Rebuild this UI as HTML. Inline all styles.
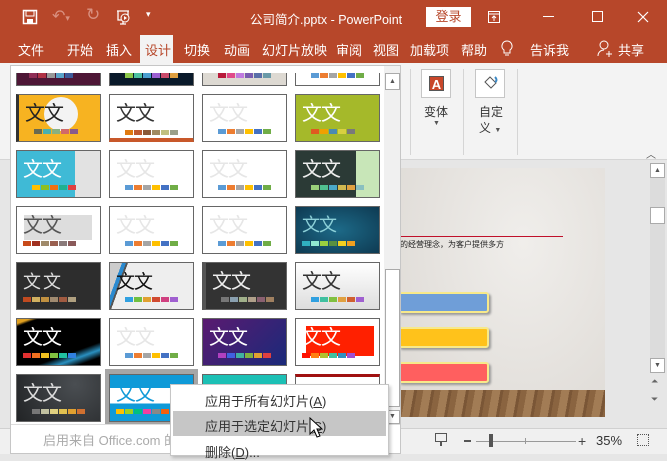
<!DOCTYPE html>
<html><head><meta charset="utf-8"><style>
*{margin:0;padding:0;box-sizing:border-box}
body{width:667px;height:454px;overflow:hidden;position:relative;background:#e6e6e6;font-family:"Liberation Sans","Noto Sans CJK SC",sans-serif}
.a{position:absolute}
.tb{position:absolute;top:0;left:0;width:667px;height:63px;background:#b7472a}
.tab{position:absolute;top:40px;color:#fff;font-size:13px}
.t{position:absolute;width:85px;height:48px;border:1px solid #666;overflow:hidden}
.t b{position:absolute;left:6px;top:2px;font:20px "Noto Sans CJK SC",sans-serif;letter-spacing:-1px;font-weight:400}
.t i{position:absolute;left:15px;bottom:7px;display:flex;gap:1px}
.t i s{display:block;width:8px;height:5px;text-decoration:none}
.sw s:nth-child(1){background:#5b9bd5}.sw s:nth-child(2){background:#ed7d31}.sw s:nth-child(3){background:#a5a5a5}.sw s:nth-child(4){background:#ffc000}.sw s:nth-child(5){background:#4472c4}.sw s:nth-child(6){background:#70ad47}
.f b{color:#e6e6e6}
.mi{position:absolute;left:34px;font-size:13px;color:#333}
</style></head><body>
<div class="tb"></div>
<svg class="a" style="left:22px;top:9px" width="16" height="16" viewBox="0 0 16 16"><rect x="1.5" y="1.5" width="13" height="13" fill="none" stroke="#fff" stroke-width="1.5"/><rect x="4" y="2" width="8" height="5" fill="none" stroke="#fff"/><rect x="5" y="10" width="6" height="4" fill="#fff"/></svg>
<div class="a" style="left:52px;top:6px;color:#d99080;font-size:16px">↶<span style="font-size:9px">▾</span></div>
<div class="a" style="left:86px;top:5px;color:#d99080;font-size:17px">↻</div>
<svg class="a" style="left:115px;top:9px" width="18" height="18" viewBox="0 0 18 18"><path d="M2 2h12M3 2v9h10V2M8 11v4M5 15h6" stroke="#fff" fill="none" stroke-width="1.3"/><circle cx="10" cy="9" r="4" fill="#b7472a" stroke="#fff"/><path d="M9 7l3 2-3 2z" fill="#fff"/></svg>
<div class="a" style="left:146px;top:9px;color:#fff;font-size:9px">▾</div>
<div class="a" style="left:250px;top:9px;color:#fff;font-size:12.5px;white-space:nowrap">公司简介.pptx - PowerPoint</div>
<div class="a" style="left:426px;top:7px;width:45px;height:20px;background:#fff;color:#b7472a;font-size:13px;text-align:center;line-height:20px">登录</div>
<svg class="a" style="left:488px;top:11px" width="12" height="12" viewBox="0 0 12 12"><rect x=".5" y=".5" width="11" height="11" fill="none" stroke="#fff"/><path d="M1 3h10M6 5v5M4 7l2-2 2 2" stroke="#fff" fill="none"/></svg>
<div class="a" style="left:543px;top:16px;width:11px;height:1px;background:#fff"></div>
<div class="a" style="left:592px;top:11px;width:11px;height:11px;border:1px solid #fff"></div>
<svg class="a" style="left:637px;top:11px" width="12" height="12"><path d="M1 1l10 10M11 1L1 11" stroke="#fff" stroke-width="1.2"/></svg>
<div class="a" style="left:140px;top:35px;width:33px;height:30px;background:#f3f3f3"></div>
<div class="tab" style="left:18px">文件</div>
<div class="tab" style="left:67px">开始</div>
<div class="tab" style="left:106px">插入</div>
<div class="tab" style="left:145px;color:#b7472a">设计</div>
<div class="tab" style="left:184px">切换</div>
<div class="tab" style="left:224px">动画</div>
<div class="tab" style="left:262px">幻灯片放映</div>
<div class="tab" style="left:336px">审阅</div>
<div class="tab" style="left:373px">视图</div>
<div class="tab" style="left:410px">加载项</div>
<div class="tab" style="left:461px">帮助</div>
<svg class="a" style="left:501px;top:40px" width="12" height="17" viewBox="0 0 12 17"><path d="M6 1a5 5 0 0 0-3 9v3h6v-3a5 5 0 0 0-3-9zM4 15h4" stroke="#fff" fill="none"/></svg>
<div class="tab" style="left:530px">告诉我</div>
<svg class="a" style="left:597px;top:40px" width="17" height="18" viewBox="0 0 17 18"><circle cx="7" cy="5" r="4" stroke="#fff" fill="none"/><path d="M1 16c0-4 3-6 6-6M12 11v6M9 14h6" stroke="#fff" fill="none"/></svg>
<div class="tab" style="left:618px">共享</div>
<div class="a" style="left:0;top:63px;width:667px;height:97px;background:#f3f3f3;border-bottom:1px solid #d5d5d5"></div>
<div class="a" style="left:410px;top:69px;width:1px;height:86px;background:#d5d5d5"></div>
<div class="a" style="left:463px;top:69px;width:1px;height:86px;background:#d5d5d5"></div>
<div class="a" style="left:517px;top:69px;width:1px;height:86px;background:#d5d5d5"></div>
<div class="a" style="left:421px;top:69px;width:30px;height:29px;border:1px solid #c6c6c6;background:#fff"></div>
<div class="a" style="left:429px;top:76px;width:15px;height:15px;background:#c8472a;color:#fff;font:bold 13px 'Liberation Sans';text-align:center;line-height:15px;border:1px solid #555">A</div>
<div class="a" style="left:424px;top:103px;font-size:12px;color:#333">变体</div>
<div class="a" style="left:433px;top:120px;font-size:7px;color:#555">▼</div>
<div class="a" style="left:475px;top:69px;width:30px;height:29px;border:1px solid #c6c6c6;background:#fff"></div>
<svg class="a" style="left:481px;top:74px" width="18" height="18" viewBox="0 0 18 18"><path d="M4 8l5-5 6 6-5 5z" fill="#fff" stroke="#555"/><path d="M14 3c2 2 2 4 0 5" stroke="#3b88c4" fill="none" stroke-width="2"/></svg>
<div class="a" style="left:479px;top:103px;font-size:12px;color:#333">自定</div>
<div class="a" style="left:479px;top:119px;font-size:12px;color:#333">义 <span style="font-size:7px;color:#555">▼</span></div>
<div class="a" style="left:646px;top:146px;font-size:10px;color:#555">︿</div>
<div class="a" style="left:400px;top:168px;width:205px;height:249px;background:radial-gradient(ellipse at 60% 30%,#f0eeeb,#dcd8d3)"></div>
<div class="a" style="left:400px;top:236px;width:163px;height:1px;background:#c0102a"></div>
<div class="a" style="left:400px;top:239px;font-size:8px;color:#222;white-space:nowrap">的经营理念，为客户提供多方</div>
<div class="a" style="left:398px;top:292px;width:91px;height:21px;background:#6f9ed8;border:2px solid #f7e98a;border-radius:3px;box-shadow:2px 2px 2px #999"></div>
<div class="a" style="left:398px;top:327px;width:91px;height:21px;background:#ffc21b;border:2px solid #f7e98a;border-radius:3px;box-shadow:2px 2px 2px #999"></div>
<div class="a" style="left:398px;top:362px;width:91px;height:21px;background:#ff5f5f;border:2px solid #f7e98a;border-radius:3px;box-shadow:2px 2px 2px #999"></div>
<div class="a" style="left:400px;top:390px;width:205px;height:27px;background:repeating-linear-gradient(100deg,#8a6440 0 6px,#a27c55 6px 14px,#7a5636 14px 17px)"></div>
<div class="a" style="left:650px;top:163px;width:15px;height:209px;background:#dcdcdc"></div>
<div class="a" style="left:650px;top:163px;width:15px;height:15px;background:#fff;border:1px solid #aaa;font-size:7px;text-align:center;line-height:13px;color:#555">▲</div>
<div class="a" style="left:650px;top:207px;width:15px;height:17px;background:#fff;border:1px solid #aaa"></div>
<div class="a" style="left:650px;top:358px;width:15px;height:15px;background:#fff;border:1px solid #aaa;font-size:7px;text-align:center;line-height:13px;color:#555">▼</div>
<div class="a" style="left:651px;top:376px;font-size:9px;color:#666">⏶</div>
<div class="a" style="left:651px;top:394px;font-size:9px;color:#666">⏷</div>
<div class="a" style="left:0;top:428px;width:667px;height:26px;background:#f0f0f0;border-top:1px solid #d0d0d0"></div>
<div class="a" style="left:435px;top:433px;width:12px;height:9px;border:1px solid #555"></div>
<div class="a" style="left:440px;top:442px;width:2px;height:4px;background:#555"></div>
<div class="a" style="left:464px;top:440px;width:7px;height:2px;background:#555"></div>
<div class="a" style="left:476px;top:441px;width:100px;height:1px;background:#999"></div>
<div class="a" style="left:525px;top:438px;width:1px;height:6px;background:#999"></div>
<div class="a" style="left:489px;top:434px;width:4px;height:13px;background:#555"></div>
<div class="a" style="left:578px;top:433px;font-size:14px;color:#444">+</div>
<div class="a" style="left:596px;top:433px;font-size:13px;color:#333">35%</div>
<div class="a" style="left:637px;top:434px;width:12px;height:12px;border:1px dotted #555"></div>
<div class="a" style="left:10px;top:65px;width:391px;height:389px;background:#fff;border:1px solid #c6c6c6;overflow:hidden">
 <div class="a" style="left:0;top:7px;width:390px;height:351px;overflow:hidden">
  <div class="a" style="left:-10px;top:-72px;width:400px;height:430px">
   <div class="t" style="left:15px;top:37px;background:#4e1736"><i style="left:12px"><s style="background:#8f2d55"></s><s style="background:#b03245"></s><s style="background:#999"></s><s style="background:#5aa3c9"></s><s style="background:#3d5a9a"></s></i></div>
   <div class="t" style="left:108px;top:37px;background:#0a1a2a"><i><s style="background:#8cc84b"></s><s style="background:#4cc0a0"></s><s style="background:#4a9fd0"></s><s style="background:#9b5fd0"></s><s style="background:#c94a6a"></s><s style="background:#e0a040"></s></i></div>
   <div class="t" style="left:201px;top:37px;background:#ddd9d2"><i><s style="background:#b81a3a"></s><s style="background:#e04a8a"></s><s style="background:#c07ae0"></s><s style="background:#7a5cb0"></s><s style="background:#5a6ea8"></s><s style="background:#6a9aa8"></s></i></div>
   <div class="t sw" style="left:294px;top:37px;background:#fff"><i><s></s><s></s><s></s><s></s><s></s><s></s></i></div>

   <div class="t" style="left:15px;top:93px;background:#f7b321;border-left:3px solid #333"><div class="a" style="left:25px;top:2px;width:34px;height:34px;border-radius:50%;background:#f3f3f3"></div><b style="color:#222">文文</b><i><s style="background:#6a6a50"></s><s style="background:#4ab0b0"></s><s style="background:#8ab080"></s><s style="background:#d06a6a"></s><s style="background:#8a5a8a"></s></i></div>
   <div class="t" style="left:108px;top:93px;background:#fff;border-bottom:4px solid #c8582a"><b style="color:#333">文文</b><i style="bottom:3px"><s style="background:#e07a10"></s><s style="background:#c05a30"></s><s style="background:#8a5a3a"></s><s style="background:#a08a60"></s><s style="background:#c0c080"></s><s style="background:#9aa08a"></s></i></div>
   <div class="t sw f" style="left:201px;top:93px;background:#fff"><b>文文</b><i><s></s><s></s><s></s><s></s><s></s><s></s></i></div>
   <div class="t" style="left:294px;top:93px;background:#a5b92a"><b style="color:#fff">文文</b><i><s style="background:#e05a20"></s><s style="background:#f0a000"></s><s style="background:#4a8ab0"></s><s style="background:#d8d040"></s><s style="background:#7a7a7a"></s></i></div>

   <div class="t" style="left:15px;top:149px;background:linear-gradient(90deg,#3fbad6 70%,#e2e2e2 70%)"><b style="color:#fff">文文</b><i style="left:15px"><s style="background:#ffc000"></s><s style="background:#8fbf20"></s><s style="background:#f07010"></s><s style="background:#20b090"></s><s style="background:#e04040"></s></i></div>
   <div class="t sw f" style="left:108px;top:149px;background:#fff"><b>文文</b><i><s></s><s></s><s></s><s></s><s></s><s></s></i></div>
   <div class="t sw f" style="left:201px;top:149px;background:#fff"><b>文文</b><i><s></s><s></s><s></s><s></s><s></s><s></s></i></div>
   <div class="t" style="left:294px;top:149px;background:linear-gradient(90deg,#2b3a36 72%,#c8e6b8 72%)"><b style="color:#eee">文文</b><i><s style="background:#9ad07a"></s><s style="background:#50c090"></s><s style="background:#4aa8c8"></s><s style="background:#d0b850"></s><s style="background:#e0a040"></s><s style="background:#8ac0c0"></s></i></div>

   <div class="t" style="left:15px;top:205px;background:#fff"><div class="a" style="left:7px;top:8px;width:68px;height:25px;background:#ddd"></div><b style="color:#555">文文</b><i style="left:6px"><s style="background:#c84a1a"></s><s style="background:#a03020"></s><s style="background:#a08a6a"></s><s style="background:#9a6050"></s><s style="background:#8a7a7a"></s><s style="background:#8a5a5a"></s></i></div>
   <div class="t sw f" style="left:108px;top:205px;background:#fff"><b>文文</b><i><s></s><s></s><s></s><s></s><s></s><s></s></i></div>
   <div class="t sw f" style="left:201px;top:205px;background:#fff"><b>文文</b><i><s></s><s></s><s></s><s></s><s></s><s></s></i></div>
   <div class="t" style="left:294px;top:205px;background:radial-gradient(#1d6a88,#0e3a52)"><b style="color:#8cd0d8;font-size:18px;top:4px">文文</b><i style="left:6px"><s style="background:#30b0c0"></s><s style="background:#90e8d0"></s><s style="background:#9ad040"></s><s style="background:#5a9040"></s><s style="background:#f0d020"></s><s style="background:#f0a020"></s></i></div>

   <div class="t" style="left:15px;top:261px;background:#2d2d2d"><b style="color:#ddd;font-size:18px;top:5px">文 文</b><i style="left:6px"><s style="background:#c04a20"></s><s style="background:#d0b060"></s><s style="background:#c09040"></s><s style="background:#a08a70"></s><s style="background:#a05a40"></s><s style="background:#b0a080"></s></i></div>
   <div class="t" style="left:108px;top:261px;background:linear-gradient(110deg,#ccc 12%,#2a8ad0 12% 16%,#555 16% 18%,#eee 18%)"><b style="color:#111;font-size:19px;top:4px">文文</b><i><s style="background:#30a0e0"></s><s style="background:#70c040"></s><s style="background:#e0a030"></s><s style="background:#d04a30"></s><s style="background:#d04080"></s><s style="background:#a060d0"></s></i></div>
   <div class="t" style="left:201px;top:261px;background:#333;border-left:4px solid #555"><b style="color:#eee">文文</b><i><s style="background:#777"></s><s style="background:#8aa0b0"></s><s style="background:#a0b08a"></s><s style="background:#b0a08a"></s><s style="background:#8a6070"></s><s style="background:#a08060"></s></i></div>
   <div class="t" style="left:294px;top:261px;background:linear-gradient(#fff,#ddd)"><b style="color:#333">文文</b><i><s style="background:#30a0e0"></s><s style="background:#40c0a0"></s><s style="background:#80c040"></s><s style="background:#e0a040"></s><s style="background:#d06030"></s><s style="background:#a060d0"></s></i></div>

   <div class="t" style="left:15px;top:317px;background:linear-gradient(160deg,#e0a020 0 6%,#000 10% 70%,#2a90c0 80%,#000 90%)"><b style="color:#fff">文文</b><i style="left:6px"><s style="background:#e03030"></s><s style="background:#f07020"></s><s style="background:#f0c020"></s><s style="background:#80c040"></s><s style="background:#20c0a0"></s><s style="background:#3080e0"></s></i></div>
   <div class="t sw f" style="left:108px;top:317px;background:#fff"><b>文文</b><i><s></s><s></s><s></s><s></s><s></s><s></s></i></div>
   <div class="t" style="left:201px;top:317px;background:linear-gradient(135deg,#5a1a70,#1a2a7a)"><b style="color:#fff">文文</b><i><s style="background:#b040c0"></s><s style="background:#4060e0"></s><s style="background:#40b0a0"></s><s style="background:#80b040"></s><s style="background:#e0a030"></s><s style="background:#e04040"></s></i></div>
   <div class="t" style="left:294px;top:317px;background:#fff"><div class="a" style="left:10px;top:7px;width:68px;height:30px;background:#ff2000"></div><b style="color:#fff">文文</b><i style="left:6px"><s style="background:#ff1000"></s><s style="background:#ff8010"></s><s style="background:#b0c030"></s><s style="background:#40c0a0"></s><s style="background:#3090c0"></s><s style="background:#a050d0"></s></i></div>

   <div class="t" style="left:15px;top:373px;background:radial-gradient(circle at 70% 20%,#4a4e52,#222426)"><b style="color:#ddd">文文</b><i><s style="background:#777"></s><s style="background:#c0c0a0"></s><s style="background:#e0d080"></s><s style="background:#e0c050"></s><s style="background:#e0a030"></s><s style="background:#d07030"></s></i></div>
   <div class="a" style="left:104px;top:368px;width:93px;height:57px;background:#a6a6a6"></div>
   <div class="t" style="left:108px;top:373px;background:linear-gradient(#0f9ad8 0 28%,#fff 28% 62%,#0f9ad8 62%)"><b style="color:#0f9ad8">文文</b><i style="left:6px"><s style="background:#ffc000"></s><s style="background:#a0d020"></s><s style="background:#00c080"></s><s style="background:#f040a0"></s><s style="background:#888"></s><s style="background:#f06010"></s></i></div>
   <div class="t" style="left:201px;top:373px;background:linear-gradient(#1cc0b5 0 30%,#fff 30%)"></div>
   <div class="t" style="left:294px;top:373px;background:#fff;border-top:3px solid #a01010"><b style="color:#c03030">文文</b></div>
  </div>
 </div>
 <div class="a" style="left:373px;top:0;width:17px;height:358px;background:#f0f0f0"></div>
 <div class="a" style="left:374px;top:7px;width:15px;height:17px;background:#fff;border:1px solid #aaa;font-size:7px;text-align:center;line-height:15px;color:#555">▲</div>
 <div class="a" style="left:374px;top:203px;width:15px;height:138px;background:#fff;border:1px solid #aaa"></div>
 <div class="a" style="left:374px;top:344px;width:15px;height:14px;background:#fff;border:1px solid #aaa;font-size:7px;text-align:center;line-height:12px;color:#555">▼</div>
 <div class="a" style="left:0;top:358px;width:390px;height:1px;background:#ddd"></div>
 <div class="a" style="left:32px;top:364px;font-size:13px;color:#aaa;white-space:nowrap">启用来自 Office.com 的</div>
</div>
<div class="a" style="left:170px;top:384px;width:219px;height:72px;background:#fff;border:1px solid #c6c6c6;box-shadow:2px 2px 3px rgba(0,0,0,.2)">
 <div class="a" style="left:2px;top:26px;width:213px;height:25px;background:#c6c6c6"></div>
 <div class="mi" style="top:6px">应用于所有幻灯片(<u>A</u>)</div>
 <div class="mi" style="top:31px">应用于选定幻灯片(<u>S</u>)</div>
 <div class="mi" style="top:57px">删除(<u>D</u>)...</div>
</div>
<svg class="a" style="left:309px;top:417px" width="14" height="21" viewBox="0 0 14 21"><path d="M1 1v16l4-4 3 7 3-1-3-7h5z" fill="#fff" stroke="#000"/></svg>
</body></html>
